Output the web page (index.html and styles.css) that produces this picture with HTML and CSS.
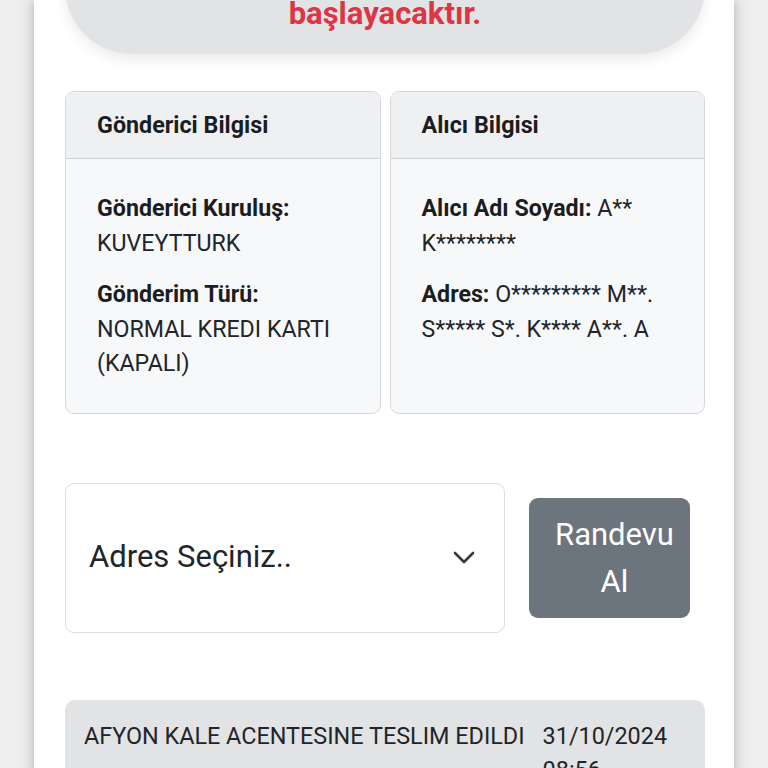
FILE: index.html
```html
<!DOCTYPE html>
<html lang="tr">
<head>
<meta charset="utf-8">
<title>Gönderi Takip</title>
<link rel="stylesheet" href="styles.css">
</head>
<body>
<main class="page">
  <div class="notice">
    <p class="notice-text">başlayacaktır.</p>
  </div>

  <section class="info-row">
    <div class="card">
      <div class="card-header">Gönderici Bilgisi</div>
      <div class="card-body">
        <p><strong>Gönderici Kuruluş:</strong> KUVEYTTURK</p>
        <p><strong>Gönderim Türü:</strong> NORMAL KREDI KARTI (KAPALI)</p>
      </div>
    </div>
    <div class="card">
      <div class="card-header">Alıcı Bilgisi</div>
      <div class="card-body">
        <p><strong>Alıcı Adı Soyadı:</strong> A** K********</p>
        <p><strong>Adres:</strong> O********* M**. S***** S*. K**** A**. A</p>
      </div>
    </div>
  </section>

  <section class="appointment">
    <div class="select">
      <span class="select-text">Adres Seçiniz..</span>
      <svg class="chevron" width="22" height="14" viewBox="0 0 22 14" aria-hidden="true">
        <path d="M2 2 L11 11 L20 2" fill="none" stroke="#343a40" stroke-width="2.6" stroke-linecap="round" stroke-linejoin="round"/>
      </svg>
    </div>
    <button class="btn">Randevu Al</button>
  </section>

  <section class="timeline">
    <div class="event">
      <span class="event-desc">AFYON KALE ACENTESINE TESLIM EDILDI</span>
      <span class="event-date">31/10/2024 08:56</span>
    </div>
  </section>
</main>
</body>
</html>
```

FILE: styles.css
```css
* {
  box-sizing: border-box;
}

html, body {
  margin: 0;
  padding: 0;
  background: #eeeeee;
  font-family: Roboto, "Noto Sans", "Liberation Sans", sans-serif;
  color: #212529;
  overflow: hidden;
}

.page {
  width: 700px;
  min-height: 768px;
  margin: 0 auto;
  background: #ffffff;
  box-shadow: 0 0 12px rgba(0, 0, 0, 0.28);
  padding: 0 29px 0 31px;
  display: flex;
  flex-direction: column;
}

.notice {
  margin-top: -80px;
  padding: 71px 20px 16px;
  background: #e2e3e5;
  border-radius: 90px;
  box-shadow: 0 6px 14px rgba(0, 0, 0, 0.08);
  text-align: center;
}

.notice-text {
  margin: 0;
  color: #dc3545;
  font-weight: 700;
  font-size: 31px;
  line-height: 46.5px;
}

.info-row {
  margin-top: 37px;
  display: flex;
  gap: 9px;
}

.card {
  flex: 1 1 0;
  border: 1px solid #d6d8db;
  border-radius: 9px;
  background: #f7f8fa;
  overflow: hidden;
}

.card-header {
  background: #eff0f2;
  border-bottom: 1px solid #cfd1d4;
  padding: 16px 31px;
  font-weight: 700;
  font-size: 23.3px;
  line-height: 34.5px;
  color: #1b1d20;
}

.card-body {
  padding: 32px 31px;
  font-size: 23.2px;
  line-height: 34.5px;
}

.card-body p {
  margin: 0 0 17px;
}

.card-body p:last-child {
  margin-bottom: 0;
}

.card-body strong {
  color: #1b1d20;
}

.appointment {
  margin-top: 69px;
  display: flex;
  align-items: center;
  gap: 24px;
}

.select {
  flex: 0 0 440px;
  height: 150px;
  border: 1px solid #dcdde0;
  border-radius: 9px;
  background: #ffffff;
  display: flex;
  align-items: center;
  justify-content: space-between;
  padding: 0 29px 0 23px;
}

.select-text {
  font-size: 31px;
  line-height: 46.5px;
  color: #212529;
}

.chevron {
  display: block;
}

.btn {
  width: 161px;
  height: 120px;
  border: none;
  border-radius: 9px;
  background: #6c757d;
  color: #ffffff;
  font-family: Roboto, "Noto Sans", "Liberation Sans", sans-serif;
  font-size: 31px;
  line-height: 47px;
  padding: 13px 12px 13px 22px;
  text-align: center;
}

.timeline {
  margin-top: 67px;
  background: #e2e3e5;
  border-radius: 10px 10px 0 0;
  padding: 19px 19px 0;
}

.event {
  display: flex;
  gap: 18px;
  align-items: flex-start;
  font-size: 23.4px;
  line-height: 34.5px;
  color: #212529;
}

.event-desc {
  flex: none;
  white-space: nowrap;
}

.event-date {
  flex: 0 0 135px;
}
```
